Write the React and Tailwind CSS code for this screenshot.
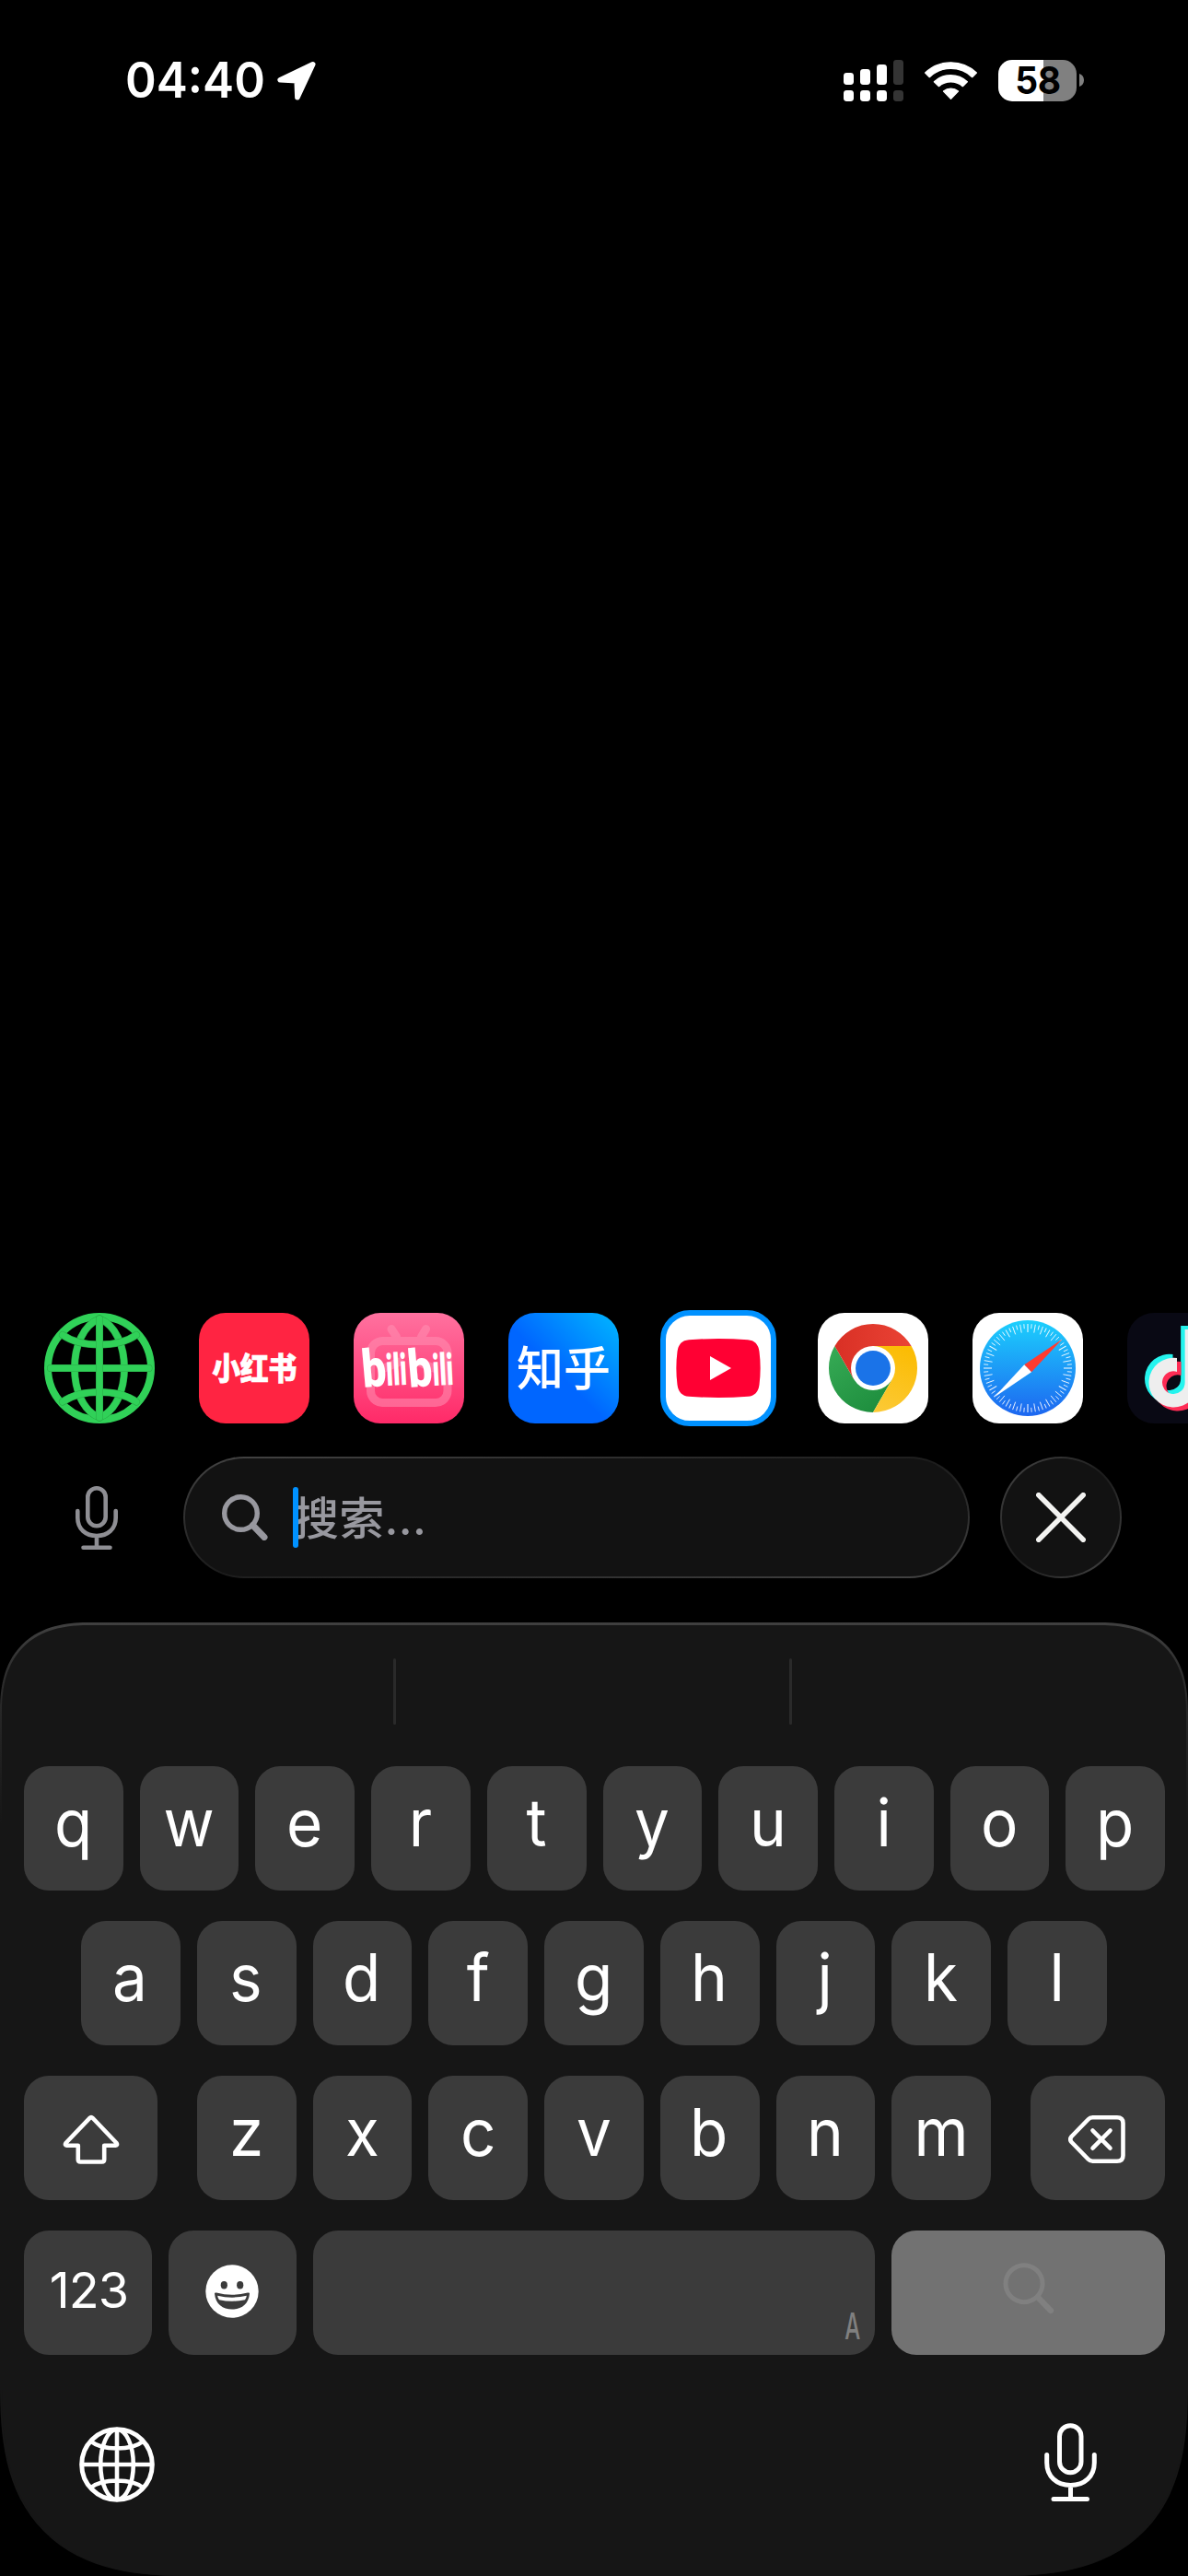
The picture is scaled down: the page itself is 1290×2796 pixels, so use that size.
import React from "react";

const SANS = "font-['Inter','Noto_Sans_CJK_SC',sans-serif]";

function StatusBar() {
  return (
    <header className="flex h-[174px] items-center justify-between pr-[113px] pl-[136px]">
      <div className="flex items-center">
        <span className="w-[165px] origin-left scale-x-[0.965] pt-px text-[53px] leading-none font-semibold">04:40</span>
        <svg width="42" height="42" viewBox="0 0 42 42" className="mt-[2px]">
          <path d="M38.7 2.9 3.2 19.8 21.2 20.6 21.9 38.7Z" fill="#fff" stroke="#fff" strokeWidth="5.6" strokeLinejoin="round" />
        </svg>
      </div>
      <div className="flex items-center">
        <svg width="65" height="45" viewBox="0 0 65 45" fill="#fff">
          <rect x="0" y="14" width="11" height="13" rx="3.4" />
          <rect x="18" y="10" width="11" height="17" rx="3.4" />
          <rect x="36" y="5" width="11" height="22" rx="3.4" />
          <rect x="54" y="0" width="11" height="27" rx="3.4" fill="#343434" />
          <rect x="0" y="33" width="11" height="12" rx="3.4" />
          <rect x="18" y="33" width="11" height="12" rx="3.4" />
          <rect x="36" y="33" width="11" height="12" rx="3.4" />
          <rect x="54" y="33" width="11" height="12" rx="3.4" fill="#343434" />
        </svg>
        <svg width="57" height="45" viewBox="342 72 171 135" className="ml-[23px]" fill="#fff" stroke="#fff" strokeWidth="4" strokeLinejoin="round">
          <path d="M344 114 A121 121 0 0 1 511 114 L497 128 A101 101 0 0 0 358 128Z" />
          <path d="M373 143.500 A79 79 0 0 1 481 143.500 L466 158 A60 60 0 0 0 388.500 158Z" />
          <path d="M403.500 174 A37.500 37.500 0 0 1 451.500 174 L427.500 199Z" />
        </svg>
        <div className="ml-[23px] flex h-[45px] w-[85px] items-center justify-center rounded-[15px] bg-[linear-gradient(to_right,#fff_49px,#808080_49px)]">
          <span className="scale-x-[0.95] text-[41px] leading-none font-bold tracking-[-0.5px] text-black">58</span>
        </div>
        <svg width="5" height="14" viewBox="0 0 5 14" className="ml-[3px]">
          <path d="M0 0C3 1 5 3.500 5 7S3 13 0 14Z" fill="#808080" />
        </svg>
      </div>
    </header>
  );
}

function GreenGlobe() {
  const lines = [
    "M60 6.500C24 20 24 100 60 113.500",
    "M60 6.500C96 20 96 100 60 113.500",
    "M20 24Q35 34.500 60 34.500T100 24",
    "M20 96.500Q35 86 60 86T100 96.500",
    "M7 60H113.500",
    "M60 6.500V113.500",
  ];
  return (
    <svg width="120" height="120" viewBox="0 0 120 120" fill="none" strokeLinecap="round">
      <circle cx="60" cy="60" r="56" stroke="#30d158" strokeWidth="8" />
      {lines.map((d) => (
        <g key={d}>
          <path d={d} stroke="#28a745" strokeWidth="8" />
          <path d={d} stroke="#30d158" strokeWidth="7" />
        </g>
      ))}
    </svg>
  );
}

function Bilibili() {
  return (
    <svg width="120" height="120" viewBox="0 0 120 120">
      <defs>
        <linearGradient id="bili" x1="0" y1="0" x2="0" y2="1">
          <stop offset="0" stopColor="#ff719f" />
          <stop offset="1" stopColor="#ff2a68" />
        </linearGradient>
      </defs>
      <rect width="120" height="120" fill="url(#bili)" />
      <g stroke="#ff8fb2" strokeOpacity="0.55" strokeWidth="9" fill="none" strokeLinecap="round">
        <path d="M41 17.500 46.500 26M78.500 17.500 73.500 26M31 30.500H89A13 13 0 0 1 102 43V84A13 13 0 0 1 89 97.500H31A13 13 0 0 1 18.500 84V43A13 13 0 0 1 31 30.500M33 60 50 53M72 54 87 60" />
      </g>
      <g fill="#fff" fontFamily="Roboto, sans-serif" fontWeight="900">
        <text transform="translate(10.500 81) rotate(-5) scale(0.82 1)" fontSize="57">b</text>
        <text transform="translate(36 79) rotate(-3) scale(0.57 1)" fontSize="48">ili</text>
        <text transform="translate(60.500 81) rotate(-5) scale(0.82 1)" fontSize="57">b</text>
        <text transform="translate(86.500 79) rotate(-3) scale(0.57 1)" fontSize="48">ili</text>
      </g>
    </svg>
  );
}

function Chrome() {
  return (
    <svg width="120" height="120" viewBox="0 0 120 120">
      <defs>
        <linearGradient id="cr" x1="0" y1="0" x2="1" y2="0"><stop stopColor="#d93025" /><stop offset="1" stopColor="#ea4335" /></linearGradient>
        <linearGradient id="cy" x1="0.300" y1="1" x2="0.600" y2="0"><stop stopColor="#fcc934" /><stop offset="1" stopColor="#fbbc04" /></linearGradient>
        <linearGradient id="cg" x1="0.700" y1="1" x2="0.100" y2="0.100"><stop stopColor="#1e8e3e" /><stop offset="1" stopColor="#34a853" /></linearGradient>
      </defs>
      <path d="M60 108A48 48 0 0 1 18.400 36L39.200 72 80.800 72Z" fill="url(#cg)" />
      <path d="M101.600 36A48 48 0 0 1 60 108L80.800 72 60 36Z" fill="url(#cy)" />
      <path d="M18.400 36A48 48 0 0 1 101.600 36H60L39.200 72Z" fill="url(#cr)" />
      <circle cx="60" cy="60" r="24" fill="#fff" />
      <circle cx="60" cy="60" r="19" fill="#1a73e8" />
    </svg>
  );
}

function Safari() {
  const ticks = Array.from({ length: 72 }, (_, i) => i);
  return (
    <svg width="120" height="120" viewBox="0 0 120 120">
      <defs>
        <linearGradient id="sf" x1="0" y1="0" x2="0" y2="1">
          <stop stopColor="#1cd0fd" />
          <stop offset="1" stopColor="#1d66f0" />
        </linearGradient>
      </defs>
      <circle cx="60" cy="60" r="52" fill="url(#sf)" />
      {ticks.map((i) =>
        i % 18 === 0 ? (
          <path key={i} d="M60 12V21" stroke="#fff" strokeOpacity="0.5" strokeWidth="2" transform={`rotate(${i * 5} 60 60)`} />
        ) : (
          <path key={i} d={i % 2 ? "M60 12V17" : "M60 12V21"} stroke="#fff" strokeOpacity="0.9" strokeWidth="0.9" transform={`rotate(${i * 5} 60 60)`} />
        )
      )}
      <path d="M97.500 28.500 56.200 56.200 64 64.200Z" fill="#ff3b30" />
      <path d="M23 92 56.200 56.200 64 64.200Z" fill="#fff" />
    </svg>
  );
}

function TikTok() {
  const note =
    "M448,209.91a210.06,210.06,0,0,1-122.77-39.25V349.38A162.55,162.55,0,1,1,185,188.31V278.2a74.62,74.62,0,1,0,52.23,71.18V0l88,0a121.18,121.18,0,0,0,1.86,22.17h0A122.18,122.18,0,0,0,381,102.39a121.43,121.43,0,0,0,67,20.14Z";
  return (
    <svg width="120" height="120" viewBox="0 0 120 120">
      <path d={note} fill="#25f4ee" transform="translate(19 14) scale(0.165)" />
      <path d={note} fill="#fe2c55" transform="translate(28 22) scale(0.165)" />
      <path d={note} fill="#eeeeee" transform="translate(23.500 18) scale(0.165)" />
    </svg>
  );
}

const TILE = "flex size-[120px] shrink-0 items-center justify-center overflow-hidden rounded-[29px]";

function AppStrip() {
  return (
    <div className="mt-[1247px] flex gap-[48px] overflow-hidden py-[4px] pl-[48px]">
      <div className="size-[120px] shrink-0"><GreenGlobe /></div>
      <div className={TILE + " bg-[#ff2442]"}>
        <span className="origin-center -translate-y-[2px] scale-y-[1.1] font-['Noto_Sans_CJK_SC',sans-serif] text-[31px] leading-none font-black tracking-[-0.5px] whitespace-nowrap [-webkit-text-stroke:0.6px_#fff]">小红书</span>
      </div>
      <div className={TILE}><Bilibili /></div>
      <div className={TILE + " bg-[linear-gradient(45deg,#0066ff_45%,#00b0ff_95%)]"}>
        <span className="-translate-y-[3px] font-['Noto_Sans_CJK_SC',sans-serif] text-[51px] leading-none font-medium whitespace-nowrap">知乎</span>
      </div>
      <div className="flex size-[120px] shrink-0 items-center justify-center rounded-[29px] bg-white outline-[6px] -outline-offset-[3px] outline-[#0091ff]">
        <svg width="92" height="64" viewBox="0 0 92 64">
          <path d="M14 1.200Q46-1.200 78 1.200 89 2 90.500 14 92.800 32 90.500 50 89 62 78 62.800 46 65.200 14 62.800 3 62 1.500 50-.800 32 1.500 14 3 2 14 1.200Z" fill="#ff0033" />
          <path d="M37 19V45L60 32Z" fill="#fff" />
        </svg>
      </div>
      <div className={TILE + " bg-white"}><Chrome /></div>
      <div className={TILE + " bg-white"}><Safari /></div>
      <div className={TILE + " bg-[#090914]"}><TikTok /></div>
    </div>
  );
}

function SearchRow() {
  return (
    <div className="mt-[32px] flex h-[132px] items-center">
      <svg width="46" height="69" viewBox="0 0 46 69" className="ml-[82px]" fill="none" stroke="#8e8e93" strokeWidth="4.6" strokeLinecap="round">
        <rect x="13.300" y="2.300" width="19.400" height="41" rx="9.700" />
        <path d="M2.300 27V34.500C2.300 46.500 11 54 23 54S43.700 46.500 43.700 34.500V27M23 54V66M8.500 66.700H37.500" />
      </svg>
      <div className="ml-[71px] h-[132px] w-[854px] rounded-full bg-[linear-gradient(to_bottom_right,#444,#1c1c1c,#444)] p-[2px]">
        <div className="flex h-full items-center rounded-full bg-[#121212] pl-[40px]">
          <svg width="50" height="50" viewBox="0 0 50 50" fill="none" stroke="#98989f" strokeLinecap="round">
            <circle cx="20.500" cy="20.500" r="17.800" strokeWidth="5.400" />
            <path d="M33.500 33.500 46 46.500" strokeWidth="7" />
          </svg>
          <div className="z-10 ml-[27px] h-[66px] w-[6px] rounded-full bg-[#0091ff]" />
          <span className="-ml-[5px] pt-[2px] text-[49px] leading-none font-medium tracking-[0.3px] text-[#98989f]">搜索...</span>
        </div>
      </div>
      <div className="ml-[33px] size-[132px] rounded-full bg-[linear-gradient(to_bottom_right,#484848,#1c1c1c,#484848)] p-[2px]">
        <div className="flex size-full items-center justify-center rounded-full bg-[#121212]">
          <svg width="54" height="54" viewBox="0 0 54 54" stroke="#f3f3f1" strokeWidth="5.600" strokeLinecap="round">
            <path d="M2.800 2.800 51.200 51.200M51.200 2.800 2.800 51.200" />
          </svg>
        </div>
      </div>
    </div>
  );
}

const KEY = "flex h-[135px] items-center justify-center rounded-[27px] bg-[#3b3b3b]";
const PANEL_CORNERS =
  "[corner-shape:superellipse(1.3)_superellipse(1.3)_superellipse(1.4)_superellipse(1.4)]";

function Letters({ chars }) {
  return chars.split("").map((c) => (
    <div key={c} className={KEY + " min-w-0 flex-1 pr-px pb-[12px]"}>
      <span className="scale-x-[0.95] text-[71px] leading-none">{c}</span>
    </div>
  ));
}

function Keyboard() {
  return (
    <div className={PANEL_CORNERS + " mt-[48px] h-[1035px] w-[1290px] rounded-t-[98px] rounded-b-[208px] bg-[linear-gradient(to_bottom,#404040,#2c2c2c_60px,#161616_220px)] px-[2px] pt-[3px]"}>
      <div className={PANEL_CORNERS + " flex h-full flex-col rounded-t-[96px] rounded-b-[208px] bg-[#161616] pr-[23px] pl-[24px]"}>
        <div className="flex h-[153px] pt-[36px]">
          <div className="ml-[401px] h-[72px] w-[3px] rounded-full bg-[#2a2a2a]" />
          <div className="ml-[427px] h-[72px] w-[3px] rounded-full bg-[#2a2a2a]" />
        </div>
        <div className="flex flex-col gap-[33px]">
          <div className="flex gap-[18px]"><Letters chars="qwertyuiop" /></div>
          <div className="flex gap-[18px] pr-[63px] pl-[62px]"><Letters chars="asdfghjkl" /></div>
          <div className="flex">
            <div className={KEY + " w-[145px] shrink-0"}>
              <svg width="62" height="54" viewBox="0 0 62 54" fill="none" stroke="#fff" strokeWidth="4.600" strokeLinejoin="round" className="mt-[3px]">
                <path d="M29.500 3.800Q31 2.200 32.500 3.800L58.500 31Q60 33.500 57.500 33.700H45.200V49Q45.200 51.500 42.700 51.500H19.300Q16.800 51.500 16.800 49V33.700H4.500Q2 33.500 3.500 31Z" />
              </svg>
            </div>
            <div className="mx-[43px] flex flex-1 gap-[18px]"><Letters chars="zxcvbnm" /></div>
            <div className={KEY + " w-[146px] shrink-0 pr-[2px]"}>
              <svg width="62" height="52" viewBox="0 0 62 52" fill="none" stroke="#fff" strokeWidth="4.600" strokeLinecap="round" strokeLinejoin="round" className="mt-[3px]">
                <path d="M26.500 2.300H53Q59.500 2.300 59.500 8.500V43.500Q59.500 49.700 53 49.700H26.500Q23.500 49.700 21.500 47.500L3.500 29Q1 26 3.500 23L21.500 4.500Q23.500 2.300 26.500 2.300Z" />
                <path d="M26.500 16.500 45.500 35.700M45.500 16.500 26.500 35.700" />
              </svg>
            </div>
          </div>
          <div className="flex gap-[18px]">
            <div className={KEY + " w-[139px] shrink-0 pb-[5px] pl-[2px] text-[54px] leading-none tracking-[-1px]"}>123</div>
            <div className={KEY + " w-[139px] shrink-0 pr-px"}>
              <svg width="58" height="58" viewBox="0 0 58 58" className="-mt-[4px]">
                <circle cx="29" cy="29" r="28.700" fill="#fff" />
                <ellipse cx="20.300" cy="22.200" rx="3.600" ry="4.200" fill="#3b3b3b" />
                <ellipse cx="37.700" cy="22.200" rx="3.600" ry="4.200" fill="#3b3b3b" />
                <path d="M10 31.500Q10 30 12 30.500 29 35 46 30.500 48 30 48 31.500C47 43 39 48.600 29 48.600S11 43 10 31.500Z" fill="#3b3b3b" />
                <path d="M13.200 33.800Q29 37.500 44.800 33.800 44.500 37 43 38.200 29 41.200 15 38.200 13.500 37 13.200 33.800Z" fill="#fff" />
              </svg>
            </div>
            <div className="flex h-[135px] flex-1 items-end justify-end rounded-[27px] bg-[#3b3b3b] pr-[16px] pb-[11px]">
              <span className="origin-right scale-x-[0.600] text-[40px] leading-none font-medium text-[#808080]">A</span>
            </div>
            <div className="flex h-[135px] w-[297px] items-center justify-center rounded-[27px] bg-[#727272]">
              <svg width="56" height="56" viewBox="0 0 56 56" fill="none" stroke="#808080" strokeLinecap="round" className="-mt-[10px]">
                <circle cx="23" cy="22.700" r="20" strokeWidth="5" />
                <path d="M38 37.500 52 52" strokeWidth="6.200" />
              </svg>
            </div>
          </div>
        </div>
        <div className="mt-[74px] flex items-start justify-between pr-[74px] pl-[60px]">
          <svg width="82" height="82" viewBox="0 0 82 82" fill="none" stroke="#fff" strokeWidth="4.600" className="mt-[4px]">
            <circle cx="41" cy="41" r="38.300" strokeWidth="5" />
            <ellipse cx="41" cy="41" rx="17.800" ry="38" />
            <path d="M41 3V79M3 41H79M13 16Q22 23.500 41 23.500T69 16M13 66Q22 58.500 41 58.500T69 66" />
          </svg>
          <svg width="57" height="86" viewBox="0 0 57 86" fill="none" stroke="#fff" strokeWidth="5" strokeLinecap="round">
            <rect x="16.500" y="2.700" width="23.500" height="51" rx="11.750" />
            <path d="M2.700 34.500V43C2.700 58 13.500 67.500 28.500 67.500S54.300 58 54.300 43V34.500M28.500 67.500V82M10 82.500H46.500" />
          </svg>
        </div>
      </div>
    </div>
  );
}

export default function App() {
  return (
    <div className={SANS + " flex h-[2796px] w-[1290px] flex-col overflow-hidden bg-black text-white"}>
      <StatusBar />
      <AppStrip />
      <SearchRow />
      <Keyboard />
    </div>
  );
}
